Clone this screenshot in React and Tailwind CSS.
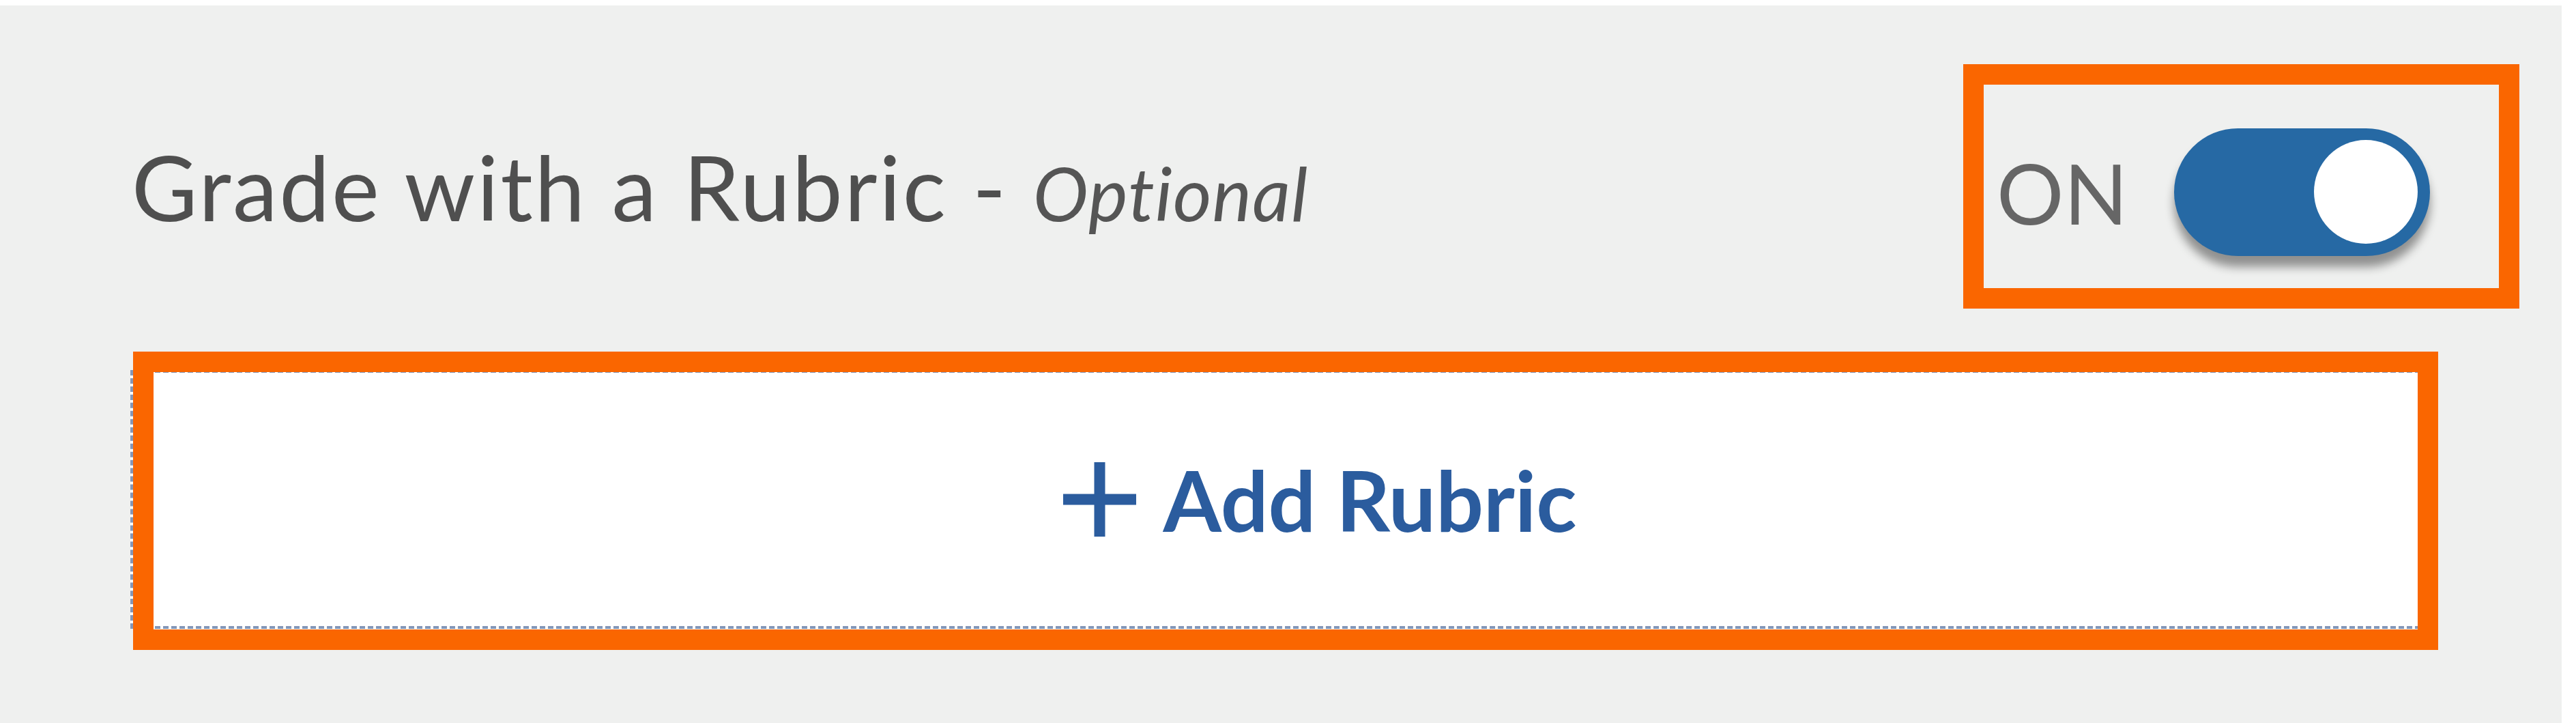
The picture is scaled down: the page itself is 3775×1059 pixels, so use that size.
import React from 'react';

const Toggle = ({ on }) => (
  <div className="flex items-center gap-[68px]">
    <span className="text-[123px] leading-none text-[#666666]">{on ? 'ON' : 'OFF'}</span>
    <div className="flex h-[187px] w-[375px] items-center justify-end rounded-full bg-[#2669a4] pr-[18px] shadow-[0_16px_14px_rgba(0,0,0,0.4)]">
      <div className="h-[152px] w-[152px] rounded-full bg-white" />
    </div>
  </div>
);

const App = () => {
  return (
    <div className="min-h-screen bg-white pt-[8px] font-['Lato',sans-serif] [font-variant-ligatures:none]">
      <div className="h-[1051px] w-[3754px] bg-[#eff0ef] pl-[193px] pt-[86px]">
        <div className="flex items-center">
          <h2 className="text-[132px] leading-none tracking-[2.8px] text-[#4f4f4f]">
            Grade with a Rubric - <em className="text-[109px] tracking-[1px] text-[#555555]">Optional</em>
          </h2>
          {/* highlighted toggle */}
          <div className="ml-auto mr-[62px] h-[358px] w-[815px] border-[30px] border-[#fa6600] pl-[19px] pt-[16px]">
            <div className="flex h-full items-center">
              <Toggle on />
            </div>
          </div>
        </div>

        <div className="relative -ml-[2px] mt-[90px] h-[379px] w-[3356px] border-[4px] border-dashed border-[#8497b8] bg-white">
          <button className="flex h-full w-full items-center justify-center gap-[40px] pl-[130px] text-[#2b5c9e]">
            <svg width="107" height="109" viewBox="0 0 107 109">
              <path d="M53.5 0V109M0 54.5H107" stroke="currentColor" strokeWidth="16" />
            </svg>
            <span className="text-[123px] font-bold leading-none">Add Rubric</span>
          </button>
          {/* highlight overlay */}
          <div className="pointer-events-none absolute -top-[31px] left-[0px] -right-[30px] -bottom-[35px] border-[30px] border-[#fa6600]" />
        </div>
      </div>
    </div>
  );
};

export default App;
